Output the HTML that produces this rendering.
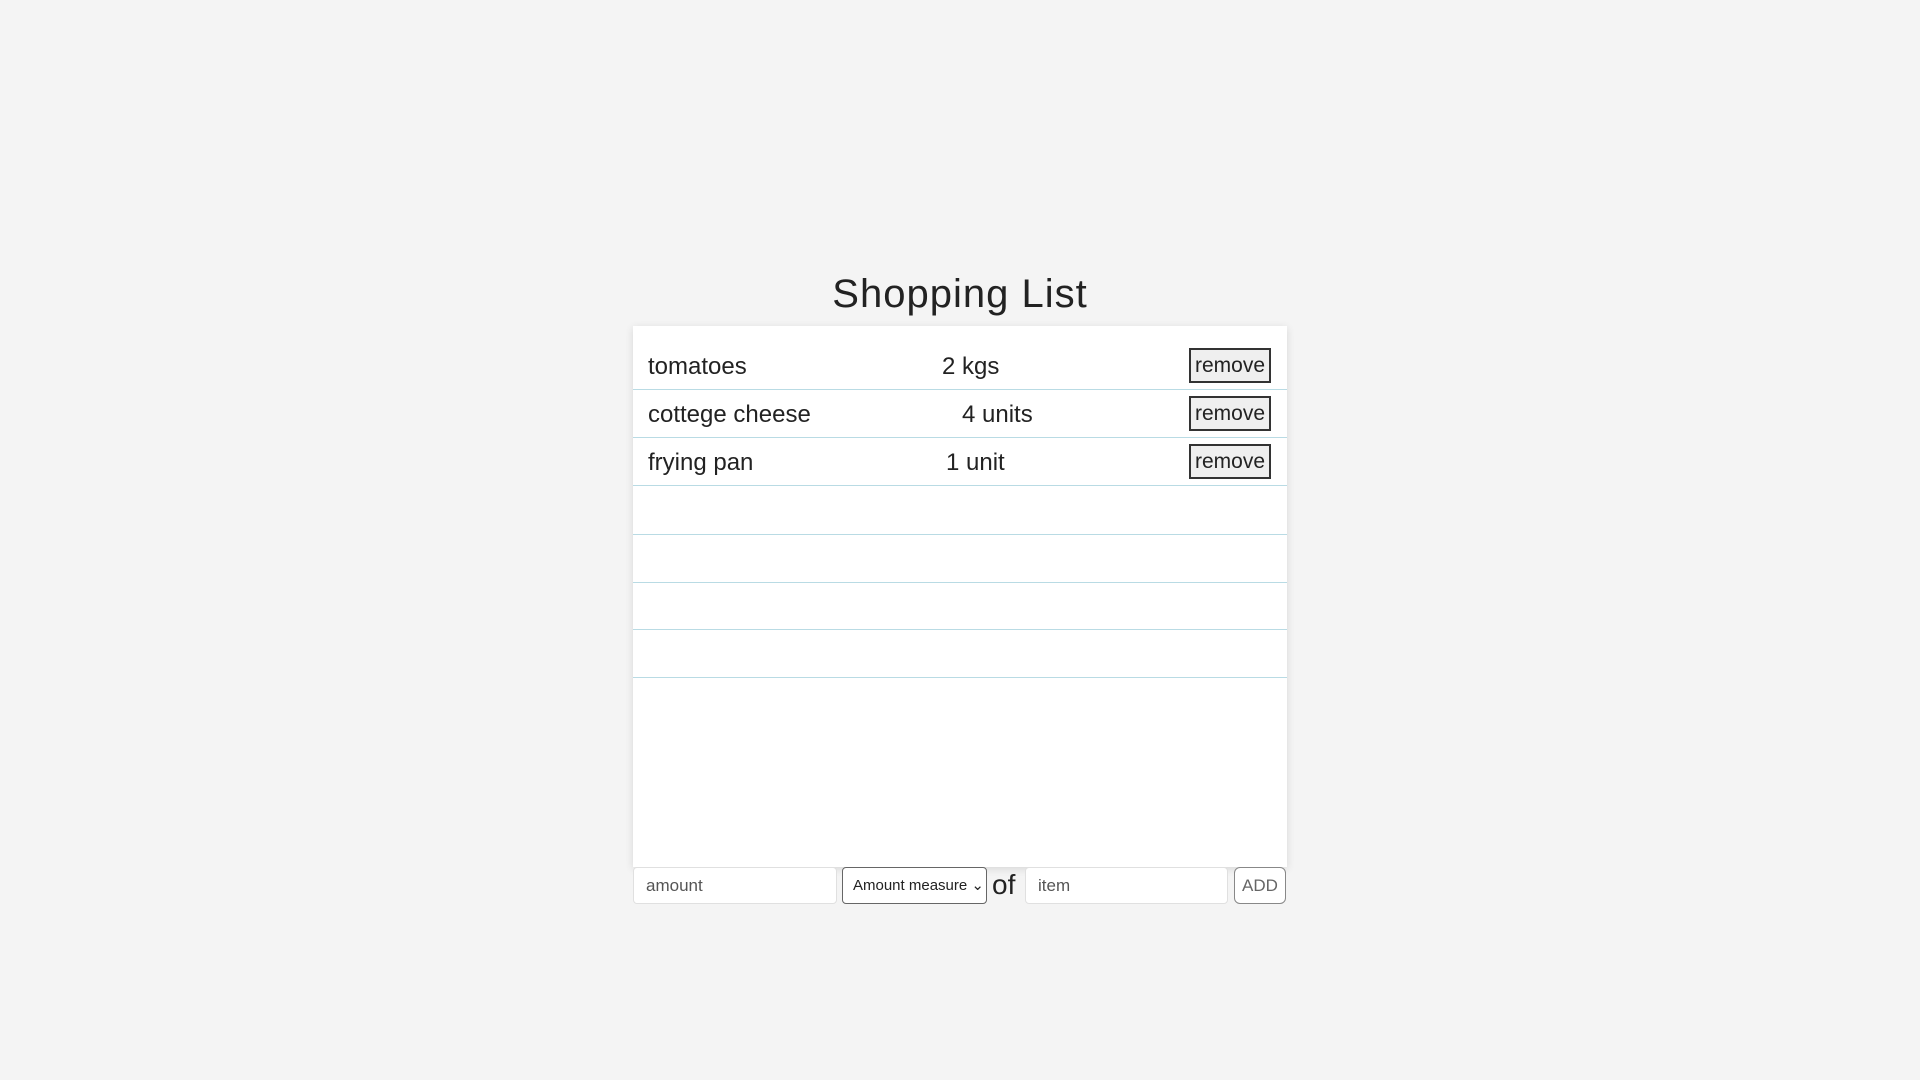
<!DOCTYPE html>
<html><head><meta charset="utf-8"><style>
html,body{margin:0;width:1920px;height:1080px;background:#f4f4f4;font-family:"Liberation Sans",sans-serif;color:#222;overflow:hidden;position:relative}
h1{position:absolute;left:0;width:1920px;top:272px;margin:0;text-align:center;font-weight:normal;font-size:40px;letter-spacing:1px}
.box{position:absolute;left:633px;top:326px;width:654px;height:541px;background:#fff;box-shadow:0 2px 8px rgba(0,0,0,.12)}
.line{position:absolute;left:0;width:654px;height:1px;background:#b9dbe4}
.t{position:absolute;font-size:24px}
.rm{position:absolute;left:556px;width:82px;height:35px;border:2px solid #333;background:#efefef;box-sizing:border-box;font-size:21px;text-align:center;line-height:31px}
.in{position:absolute;top:867px;height:37px;background:#fff;border:1px solid #e0e0e0;border-radius:4px;box-sizing:border-box;font-size:17px;color:#555;padding-left:12px;line-height:35px}
</style></head><body>
<h1>Shopping List</h1>
<div class="box">
<div class="line" style="top:63px"></div>
<div class="line" style="top:111px"></div>
<div class="line" style="top:159px"></div>
<div class="line" style="top:208px"></div>
<div class="line" style="top:256px"></div>
<div class="line" style="top:303px"></div>
<div class="line" style="top:351px"></div>
<div class="t" style="left:15px;top:27px">tomatoes</div>
<div class="t" style="left:309px;top:27px">2 kgs</div>
<div class="rm" style="top:22px">remove</div>
<div class="t" style="left:15px;top:75px">cottege cheese</div>
<div class="t" style="left:329px;top:75px">4 units</div>
<div class="rm" style="top:70px">remove</div>
<div class="t" style="left:15px;top:123px">frying pan</div>
<div class="t" style="left:313px;top:123px">1 unit</div>
<div class="rm" style="top:118px">remove</div>
</div>
<div class="in" style="left:633px;width:204px">amount</div>
<div class="in" style="left:842px;width:145px;border:1px solid #666;color:#222;font-size:15px;padding-left:10px">Amount measure &#8964;</div>
<div style="position:absolute;left:992px;top:869px;font-size:28px">of</div>
<div class="in" style="left:1025px;width:203px">item</div>
<div class="in" style="left:1234px;width:52px;border:1px solid #888;border-radius:6px;padding:0;text-align:center;color:#666">ADD</div>
</body></html>
